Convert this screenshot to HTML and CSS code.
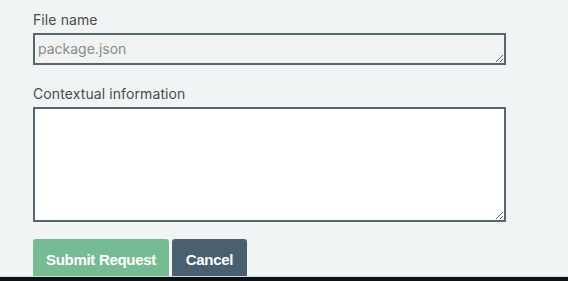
FILE: index.html
```html
<!DOCTYPE html>
<html>
<head>
<meta charset="utf-8">
<link rel="stylesheet" href="styles.css">
</head>
<body>
<form class="form">
  <label class="label" for="fname">File name</label>
  <textarea id="fname" class="field field-readonly" readonly>package.json</textarea>
  <label class="label label-second" for="ctx">Contextual information</label>
  <textarea id="ctx" class="field field-large"></textarea>
  <div class="actions">
    <button type="button" class="btn btn-submit">Submit Request</button>
    <button type="button" class="btn btn-cancel">Cancel</button>
  </div>
</form>
<div class="bottom-bar"></div>
</body>
</html>
```

FILE: styles.css
```css
html, body {
  margin: 0;
  padding: 0;
  background: #f1f4f5;
  height: 100%;
  overflow: hidden;
}
.form {
  display: flex;
  flex-direction: column;
  align-items: flex-start;
  padding: 11px 0 0 33px;
  font-family: Inter, "Liberation Sans", sans-serif;
}
.label {
  font-size: 14px;
  line-height: 17px;
  color: #4a4a4a;
  letter-spacing: 0.1px;
  margin-bottom: 5px;
}
.label-second {
  margin-top: 20px;
}
.field {
  box-sizing: border-box;
  width: 473px;
  margin: 0;
  border: 2px solid #56666f;
  border-radius: 0;
  padding: 4px 3px 2px;
  font-family: Inter, "Liberation Sans", sans-serif;
  font-size: 14px;
  line-height: 20px;
  color: #8a8a8a;
  background: #ffffff;
  outline: none;
}
.field-readonly {
  height: 32px;
  background: #f1f3f3;
}
.field-large {
  height: 115px;
}
.actions {
  display: flex;
  gap: 3px;
  margin-top: 17px;
}
.btn {
  border: none;
  border-radius: 3px;
  height: 41px;
  padding: 0;
  font-family: "Liberation Sans", Arial, sans-serif;
  font-weight: bold;
  font-size: 15px;
  letter-spacing: -0.3px;
  color: #ffffff;
}
.btn-submit {
  background: #77bb95;
  width: 136px;
}
.btn-cancel {
  background: #4a6070;
  width: 75px;
}
.bottom-bar {
  position: fixed;
  left: 0;
  right: 0;
  bottom: 0;
  height: 4px;
  background: #0d1117;
  border-top: 1px solid #d4d8da;
}
```
